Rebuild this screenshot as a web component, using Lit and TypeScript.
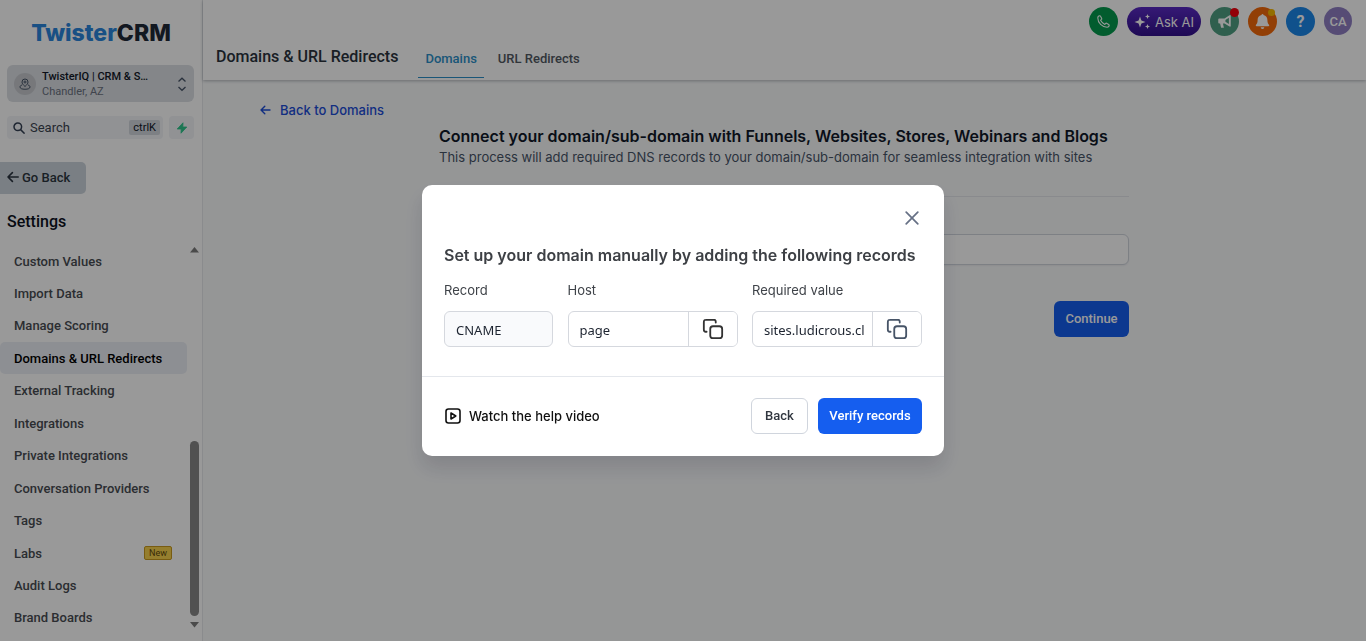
import { LitElement, html, css } from "lit";
import { customElement, state } from "lit/decorators.js";

const copyIcon = html`<svg width="22" height="22" viewBox="0 0 24 24" fill="none" stroke="currentColor" stroke-width="2" stroke-linecap="round" stroke-linejoin="round" aria-hidden="true">
  <path d="M5 15c-.93 0-1.4 0-1.77-.15a2 2 0 0 1-1.08-1.08C2 13.4 2 12.93 2 12V5.2c0-1.12 0-1.68.22-2.1.19-.38.5-.7.87-.88C3.52 2 4.08 2 5.2 2H12c.93 0 1.4 0 1.77.15a2 2 0 0 1 1.08 1.08C15 3.6 15 4.07 15 5"/>
  <rect x="9" y="9" width="13" height="13" rx="3"/></svg>`;

@customElement("app-sidebar")
export class AppSidebar extends LitElement {
  @state() private active = "Domains & URL Redirects";

  private items = [
    "Custom Values", "Import Data", "Manage Scoring", "Domains & URL Redirects",
    "External Tracking", "Integrations", "Private Integrations",
    "Conversation Providers", "Tags", "Labs", "Audit Logs", "Brand Boards",
  ];

  static styles = css`
    :host { display: flex; flex-direction: column; min-height: 0; box-sizing: border-box; background: #fff; font-family: Roboto, sans-serif; color: #2b3440; }
    * { box-sizing: border-box; }
    button { font: inherit; color: inherit; border: 0; cursor: pointer; }
    .logo { padding: 18px 0 0; text-align: center; font: 800 23px/30px Inter, sans-serif; color: #2b86dc; }
    .logo span { color: #1f2937; }
    .account { margin: 17px 8px 0 7px; height: 37px; padding: 0 7px; display: flex; align-items: center; gap: 6px; border-radius: 6px; background: #dcdfe4; text-align: left; }
    .pin { width: 22px; height: 22px; border-radius: 50%; background: #c6c9ce; display: grid; place-items: center; flex: none; }
    .who { flex: 1; min-width: 0; display: block; font-size: 11px; line-height: 15px; color: #6b7280; }
    .who b { display: block; font-weight: 500; color: #111827; }
    .tools { margin: 14px 8px 0 7px; display: flex; gap: 6px; height: 23px; }
    .search { flex: 1; min-width: 0; display: flex; align-items: center; gap: 5px; padding: 0 3px 0 6px; background: #f2f4f7; border-radius: 4px; }
    .search input { flex: 1; min-width: 0; width: 0; padding: 0; border: 0; outline: 0; background: none; font: 13px/20px Roboto, sans-serif; }
    .search input::placeholder { color: #3b4450; opacity: 1; }
    kbd { font: 11px/15px Roboto, sans-serif; background: #d0d5dd; color: #111827; border-radius: 2px; padding: 0 4px; }
    .bolt { width: 25px; padding: 0; display: grid; place-items: center; border-radius: 4px; background: #f2f4f7; }
    .goback { align-self: flex-start; margin-top: 23px; height: 32px; width: 86px; padding: 0 0 2px 7px; display: flex; align-items: center; gap: 3px; background: #ccd4dc; border-radius: 0 5px 5px 0; font-size: 13px; font-weight: 500; }
    h2 { margin: 17px 0 0 7px; font-size: 16px; line-height: 22px; font-weight: 500; color: #0c111d; }
    .scroller { display: flex; flex: 1; min-height: 0; margin-top: 12px; }
    nav { flex: 1; min-width: 0; display: flex; flex-direction: column; overflow: hidden; justify-content: space-between; padding-bottom: 7px; }
    nav a { display: flex; align-items: center; justify-content: space-between; flex: none; height: 32px; padding: 0 15px 0 14px; border-radius: 5px; color: #484c52; font-size: 13px; font-weight: 500; text-decoration: none; }
    nav a.on { background: #eceff6; color: #000; }
    .new { font-size: 9px; font-weight: 400; line-height: 12px; padding: 0 4px; color: #5f4a0c; background: #f9d24e; border: 1px solid #c99a1e; border-radius: 2px; }
    .bar { width: 15px; display: flex; flex-direction: column; align-items: center; padding: 2px 0 13px; color: #7c7c7c; }
    .bar i { width: 9px; flex: 1; margin-top: 188px; margin-bottom: 6px; border-radius: 5px; background: #888; }
    .bar svg { flex: none; }
  `;

  render() {
    return html`
      <div class="logo">Twister<span>CRM</span></div>
      <button class="account">
        <span class="pin"><svg width="12" height="12" viewBox="0 0 24 24" fill="none" stroke="#475467" stroke-width="2"><path d="M12 17c4-3.500 6-6 6-9A6 6 0 0 0 6 8c0 3 2 5.500 6 9z"/><circle cx="12" cy="8" r="2"/><path d="M6 14c-3 1-4 2-4 4 0 3 4 4.500 10 4.500S22 21 22 18c0-2-1-3-4-4"/></svg></span>
        <span class="who"><b>TwisterIQ | CRM &amp; S…</b>Chandler, AZ</span>
        <svg width="10" height="16" viewBox="0 0 10 16" fill="none" stroke="#475467" stroke-width="1.3"><path d="M1.500 5.500 5 2.200 8.500 5.500M1.500 11 5 14.300 8.500 11"/></svg>
      </button>
      <div class="tools">
        <label class="search">
          <svg width="12" height="12" viewBox="0 0 12 12" fill="none" stroke="#344054" stroke-width="1.500"><circle cx="4.800" cy="4.800" r="3.800"/><path d="m7.600 7.600 4 4"/></svg>
          <input type="text" placeholder="Search" aria-label="Search" />
          <kbd>ctrlK</kbd>
        </label>
        <button class="bolt" aria-label="Quick actions"><svg width="12" height="12" viewBox="0 0 12 12" fill="#2fc58b" stroke="#2fc58b" stroke-width=".8" stroke-linejoin="round"><path d="M7 .8 1.200 7h4L5 11.200 10.800 5h-4z"/></svg></button>
      </div>
      <button class="goback"><svg width="12" height="12" viewBox="0 0 12 12" fill="none" stroke="currentColor" stroke-width="1.600" stroke-linecap="round" stroke-linejoin="round"><path d="M11.200 6H1M5.400 1.600 1 6l4.400 4.400"/></svg>Go Back</button>
      <h2>Settings</h2>
      <div class="scroller">
        <nav>
          ${this.items.map((t) => html`<a href="#" class=${t === this.active ? "on" : ""} @click=${(e: Event) => { e.preventDefault(); this.active = t; }}>${t}${t === "Labs" ? html`<span class="new">New</span>` : ""}</a>`)}
        </nav>
        <div class="bar" aria-hidden="true">
          <svg width="9" height="6" viewBox="0 0 9 6" fill="currentColor"><path d="M4.500 0 9 5.500H0z"/></svg>
          <i></i>
          <svg width="9" height="6" viewBox="0 0 9 6" fill="currentColor"><path d="M4.500 5.500 9 0H0z"/></svg>
        </div>
      </div>`;
  }
}

@customElement("app-header")
export class AppHeader extends LitElement {
  static styles = css`
    :host { display: flex; justify-content: space-between; box-sizing: border-box; height: 80px; padding: 0 14px 0 13px; background: #fff; box-shadow: 0 1px 3px rgba(16, 24, 40, .3); font-family: Roboto, sans-serif; }
    * { box-sizing: border-box; }
    .left { display: flex; align-items: flex-end; }
    h1 { margin: 0 20px 11px 0; font-size: 16px; line-height: 24px; font-weight: 500; color: #2a323d; }
    .tab { height: 39px; padding: 0 7px; margin-right: 7px; margin-bottom: 2px; font-size: 13px; font-weight: 500; line-height: 40px; color: #525963; text-decoration: none; }
    .tab.on { color: #2c8fc9; border-bottom: 1px solid #2c8fc9; }
    .actions { display: flex; gap: 9px; padding-top: 7px; align-items: flex-start; }
    button { border: 0; padding: 0; height: 29px; width: 29px; border-radius: 50%; display: grid; place-items: center; position: relative; color: #fff; font: 500 13px Roboto, sans-serif; cursor: pointer; }
    .phone { background: #049a4e; }
    .ask { width: 74px; border-radius: 15px; display: flex; align-items: center; justify-content: center; gap: 4px; font: 13px Inter, sans-serif; background: linear-gradient(#5a2bc4, #32108c); }
    .news { background: #4f9f82; }
    .bell { background: #f46a0b; }
    .help { background: #1c88ea; font-size: 16px; font-weight: 700; }
    .user { background: #8f7fc4; width: 28px; height: 28px; }
    .dot { position: absolute; top: 1px; right: 0; width: 9px; height: 9px; border-radius: 50%; background: #f5000e; }
    .dot.y { top: 2px; right: 2px; width: 7px; height: 7px; background: #f5b800; }
  `;
  render() {
    return html`
      <div class="left">
        <h1>Domains &amp; URL Redirects</h1>
        <a class="tab on" href="#">Domains</a><a class="tab" href="#">URL Redirects</a>
      </div>
      <div class="actions">
        <button class="phone" aria-label="Call"><svg width="13" height="13" viewBox="0 0 24 24" fill="none" stroke="#fff" stroke-width="2" stroke-linejoin="round"><path d="M1.500 5.500C1.500 14.500 9.500 22.500 18.500 22.500c2.500 0 4-1.500 4-3.500 0-.7-.3-1.200-.9-1.500l-4-2.200c-.7-.4-1.300-.2-1.800.4l-1.300 1.700C11 15.500 8.500 13 6.600 9.500l1.700-1.300c.6-.5.8-1.100.4-1.800l-2.200-4C6.200 1.800 5.700 1.500 5 1.500c-2 0-3.500 1.500-3.500 4z"/></svg></button>
        <button class="ask"><svg width="17" height="17" viewBox="0 0 17 17" fill="#fff"><path d="M6 3.500 7.400 7.600 11.500 9 7.400 10.400 6 14.500 4.600 10.400.5 9l4.100-1.400zM13.500 1l.7 1.800 1.800.7-1.800.7-.7 1.800-.7-1.800-1.800-.7 1.800-.7zM13.500 11l.7 1.800 1.800.7-1.800.7-.7 1.800-.7-1.800-1.800-.7 1.800-.7z"/></svg>Ask AI</button>
        <button class="news" aria-label="Announcements"><svg width="15" height="15" viewBox="0 0 24 24"><path fill="#fff" d="M2 8.500A1.500 1.500 0 0 1 3.500 7H12l8-5h2v18h-2l-8-5H9.500l1.500 7H6.500L5 15H3.500A1.500 1.500 0 0 1 2 13.500z"/><path fill="#4f9f82" d="M13.500 9.500 19 6v10l-5.500-3.500z"/></svg><span class="dot"></span></button>
        <button class="bell" aria-label="Notifications"><svg width="15" height="17" viewBox="0 0 15 17" fill="#fff"><path d="M7.500 1a1 1 0 0 1 1 1c2.600.5 3.900 2.400 3.900 5 0 2.800.7 3.800 1.600 4.800.5.6.2 1.400-.6 1.400H1.600c-.8 0-1.100-.8-.6-1.400C1.900 10.800 2.600 9.800 2.600 7c0-2.600 1.300-4.500 3.900-5a1 1 0 0 1 1-1zM5.700 14.300h3.600a1.800 1.800 0 0 1-3.600 0z"/></svg><span class="dot y"></span></button>
        <button class="help" aria-label="Help">?</button>
        <button class="user">CA</button>
      </div>`;
  }
}

@customElement("records-dialog")
export class RecordsDialog extends LitElement {
  static styles = css`
    :host { display: block; width: 522px; max-width: 100%; box-sizing: border-box; background: #fff; border-radius: 10px; box-shadow: 0 12px 20px rgba(16, 24, 40, .14); font-family: Inter, sans-serif; color: #344054; }
    * { box-sizing: border-box; }
    button { cursor: pointer; }
    .top { padding: 22px 22px 29px; display: flex; flex-direction: column; }
    .close { align-self: flex-end; width: 20px; height: 22px; padding: 0; border: 0; background: none; color: #667085; display: grid; place-items: center; }
    h2 { margin: 14px 0 0; font-size: 16px; line-height: 24px; font-weight: 600; color: #3d4045; white-space: nowrap; }
    .fields { display: grid; grid-template-columns: 109px 170px 170px; justify-content: space-between; margin-top: 13px; }
    label { display: block; font-size: 13px; line-height: 20px; margin-bottom: 11px; color: #3f4349; }
    .group { display: flex; height: 36px; border: 1px solid #d5d8de; border-radius: 6px; background: #fff; overflow: hidden; }
    .group.ro { background: #f9fafc; }
    input { flex: 1; width: 0; min-width: 0; border: 0; outline: 0; background: none; padding: 2px 6px 0 11px; font: 13px/20px "Noto Sans", sans-serif; color: #1d2430; }
    .copy { width: 49px; padding: 0; border: 0; border-left: 1px solid #d5d8de; background: #fff; color: #333; display: grid; place-items: center; }
    .copy.soft { color: #475467; }
    .foot { border-top: 1px solid #e4e7ec; padding: 21px 22px 22px 23px; display: flex; align-items: center; gap: 10px; }
    .help { margin-right: auto; display: flex; align-items: center; gap: 8px; font-size: 13px; font-weight: 500; color: #101010; text-decoration: none; }
    .btn { height: 36px; border-radius: 6px; padding: 0 0 2px; font: 500 13px Roboto, sans-serif; white-space: nowrap; }
    .back { width: 57px; border: 1px solid #d0d5dd; background: #fff; color: #30363f; }
    .verify { width: 104px; border: 0; background: #155eef; color: #fff; }
  `;
  render() {
    return html`
      <div class="top">
        <button class="close" aria-label="Close"><svg width="14" height="14" viewBox="0 0 14 14" stroke="currentColor" stroke-width="1.700" stroke-linecap="round"><path d="M1.200 1.200 12.800 12.800M12.800 1.200 1.200 12.800"/></svg></button>
        <h2>Set up your domain manually by adding the following records</h2>
        <div class="fields">
          <div><label for="record">Record</label><div class="group ro"><input id="record" readonly .value=${"CNAME"} /></div></div>
          <div><label for="host">Host</label><div class="group"><input id="host" .value=${"page"} /><button class="copy" aria-label="Copy host">${copyIcon}</button></div></div>
          <div><label for="value">Required value</label><div class="group"><input id="value" .value=${"sites.ludicrous.cl"} /><button class="copy soft" aria-label="Copy value">${copyIcon}</button></div></div>
        </div>
      </div>
      <div class="foot">
        <a class="help" href="#"><svg width="16" height="16" viewBox="0 0 16 16" fill="none" stroke="currentColor" stroke-width="1.600" stroke-linejoin="round"><rect x="1" y="1" width="14" height="14" rx="2.500"/><path d="M6 5v6l4.800-3z"/></svg>Watch the help video</a>
        <button class="btn back">Back</button>
        <button class="btn verify">Verify records</button>
      </div>`;
  }
}

@customElement("app-root")
export class AppRoot extends LitElement {
  static styles = css`
    :host { display: grid; grid-template-columns: 202px minmax(0, 1fr); height: 100vh; overflow: hidden; background: #f9fafb; font-family: Inter, sans-serif; }
    * { box-sizing: border-box; }
    .page { display: flex; flex-direction: column; min-width: 0; border-left: 1px solid #e6e8eb; }
    .body { padding: 19px 58px 19px 57px; }
    .backlink { display: inline-flex; align-items: center; gap: 9px; font-size: 13px; line-height: 22px; font-weight: 500; color: #1d4ed8; text-decoration: none; }
    .content { max-width: 690px; margin: 3px auto 0; }
    h2 { margin: 0; font-size: 16px; line-height: 24px; font-weight: 600; color: #101828; white-space: nowrap; }
    p { margin: 0; font-size: 13px; line-height: 19px; color: #475467; white-space: nowrap; }
    hr { border: 0; border-top: 1px solid #e4e7ec; margin: 29px 0 12px; }
    label { display: block; font-size: 13px; line-height: 20px; color: #344054; margin-bottom: 5px; }
    input { display: block; width: 100%; height: 31px; padding: 0 12px; border: 1px solid #d0d5dd; border-radius: 6px; background: #fff; box-shadow: 0 1px 2px rgba(16, 24, 40, .06); font: 14px Inter, sans-serif; }
    .row { display: flex; justify-content: flex-end; margin-top: 36px; }
    .go { width: 75px; height: 36px; padding: 0 0 2px; border: 0; border-radius: 6px; background: #155eef; color: #fff; font: 500 13px Roboto, sans-serif; }
    .overlay { position: fixed; inset: 0; display: grid; place-items: center; background: rgba(0, 0, 0, .4); }
  `;
  render() {
    return html`
      <app-sidebar></app-sidebar>
      <div class="page">
        <app-header></app-header>
        <main class="body">
          <a class="backlink" href="#"><svg width="11" height="10" viewBox="0 0 11 10" fill="none" stroke="currentColor" stroke-width="1.400" stroke-linecap="round" stroke-linejoin="round"><path d="M10 5H1M4.800 1.200 1 5l3.800 3.800"/></svg>Back to Domains</a>
          <section class="content">
            <h2>Connect your domain/sub-domain with Funnels, Websites, Stores, Webinars and Blogs</h2>
            <p>This process will add required DNS records to your domain/sub-domain for seamless integration with sites</p>
            <hr />
            <label for="domain">Domain</label>
            <input id="domain" type="text" />
            <div class="row"><button class="go">Continue</button></div>
          </section>
        </main>
      </div>
      <div class="overlay"><records-dialog role="dialog" aria-modal="true"></records-dialog></div>`;
  }
}
